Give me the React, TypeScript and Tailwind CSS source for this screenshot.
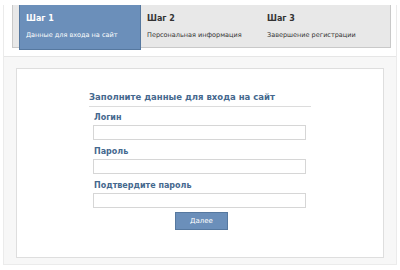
import React from 'react';

const steps = [
  { title: 'Шаг 1', text: 'Данные для входа на сайт', active: true },
  { title: 'Шаг 2', text: 'Персональная информация', active: false },
  { title: 'Шаг 3', text: 'Завершение регистрации', active: false },
];

const Field: React.FC<{ label: string }> = ({ label }) => (
  <div className="flex flex-col">
    <label className="text-[8px] font-bold text-[#45688e] pl-[1px] mb-[2px] h-[10px] leading-[10px]">{label}</label>
    <input className="w-[213px] h-[15px] border border-[#d6d6d6] bg-white outline-none" />
  </div>
);

export default function App() {
  return (
    <div className="w-[400px] h-[270px] bg-white font-['DejaVu_Sans',sans-serif] pt-[5px] px-[3px]">
      <div className="h-[260px] border border-[#ebebeb] border-t-0 bg-[#f7f7f7] flex flex-col">
        <div className="bg-white pl-[8px] pr-[5px] pb-[8px] border-b border-[#e6e6e6]">
          <div className="flex h-[43px] bg-[#e8e8e8] border border-[#c9c9c9] border-t-0 pl-[6px]">
            {steps.map((s) => (
              <div
                key={s.title}
                className={
                  s.active
                    ? 'w-[122px] h-[45px] bg-[#6b8fba] border border-[#56789f] border-t-0 px-[6px] pt-[9px] text-white'
                    : 'w-[120px] px-[6px] pt-[9px] text-[#333]'
                }
              >
                <div className="text-[8px] font-bold leading-[10px]">{s.title}</div>
                <div className="text-[6.5px] leading-[10px] mt-[6px] whitespace-nowrap">{s.text}</div>
              </div>
            ))}
          </div>
        </div>
        <div className="flex-1 px-[12px] pt-[11px] pb-[6px]">
          <div className="h-full bg-white border border-[#dedede] flex flex-col items-center pt-[23px]">
            <div className="w-[222px]">
              <div className="text-[8.5px] font-bold text-[#45688e] border-b border-[#dcdcdc] pb-[3px] leading-[11px]">
                Заполните данные для входа на сайт
              </div>
              <div className="pl-[4px] pt-[6px] flex flex-col gap-[7px]">
                <Field label="Логин" />
                <Field label="Пароль" />
                <Field label="Подтвердите пароль" />
              </div>
              <div className="flex pl-[86px] mt-[4px]">
                <button className="w-[53px] h-[18px] bg-[#6b8fba] border border-[#56789f] text-white text-[7px]">
                  Далее
                </button>
              </div>
            </div>
          </div>
        </div>
      </div>
    </div>
  );
}
